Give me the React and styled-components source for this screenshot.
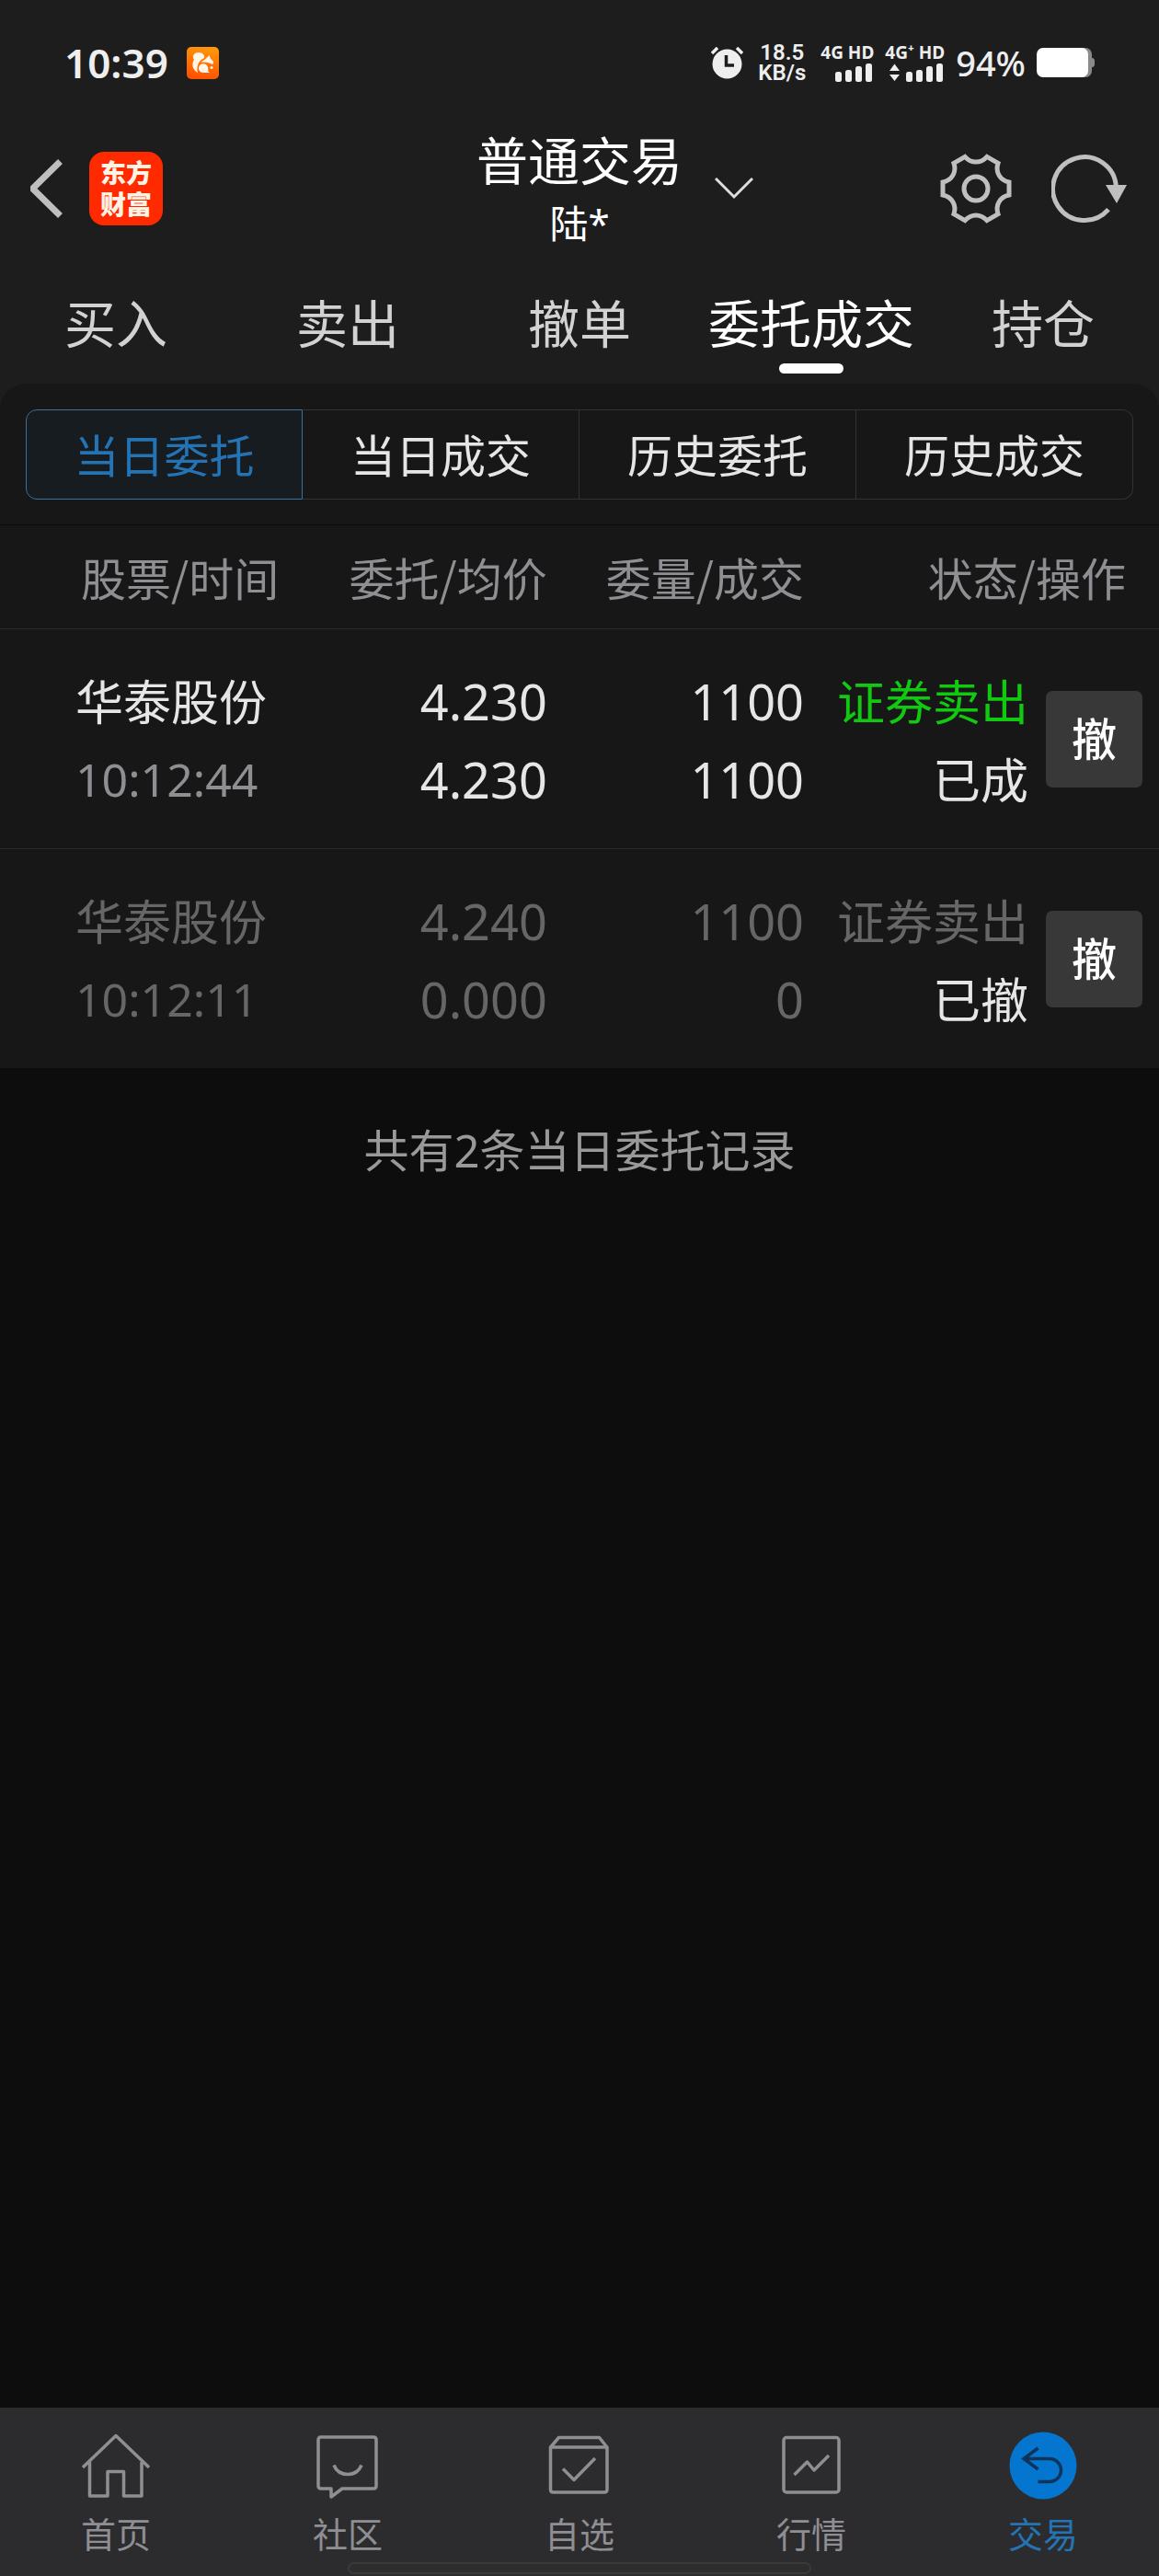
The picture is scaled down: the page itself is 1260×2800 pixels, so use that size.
/**
 * App.jsx
 * ----------------------------------------------------------------------------
 * 委托成交页面
 * - 顶部: 状态栏 + 标题 + 一级标签
 * - 中间: 分段切换 + 委托列表
 * - 底部: 主导航
 * ----------------------------------------------------------------------------
 */

import React, { useState } from "react";
import styled, { createGlobalStyle } from "styled-components";

// 颜色
const HEADER_BG = "#1d1d1e";
const PANEL_BG = "#171717";
const BODY_BG = "#0d0d0d";
const NAV_BG = "#2c2c2e";
const LINE = "#2a2a2a";
const TEXT = "#e6e6e6";
const TEXT_MUTED = "#8e8e93";
const TEXT_DIM = "#666666";
const ICON = "#bfbfbf";
const BLUE = "#2474b5";
const GREEN = "#11c911";

// 字号
const FS_TITLE = 56;
const FS_CELL = 52;
const FS_LABEL = 49;

const GlobalStyle = createGlobalStyle`
  * {
    box-sizing: border-box;
  }

  body {
    margin: 0;
    background: ${BODY_BG};
    color: ${TEXT};
    font-family: "Noto Sans", "Noto Sans CJK SC", sans-serif;
  }

  button {
    margin: 0;
    padding: 0;
    border: none;
    background: none;
    color: inherit;
    font: inherit;
    cursor: pointer;
  }
`;

const Page = styled.div`
  display: flex;
  flex-direction: column;
  min-height: 100vh;
`;

const Top = styled.header`
  background: ${HEADER_BG};
`;

/* ---------- 状态栏 ---------- */
const StatusBar = styled.div`
  display: flex;
  align-items: center;
  justify-content: space-between;
  height: 136px;
  padding: 0 70px;
  color: #eeeeee;
`;

const StatusLeft = styled.div`
  display: flex;
  align-items: center;
  gap: 20px;
`;

const Clock = styled.span`
  font-size: 44px;
  font-weight: 600;
  line-height: 60px;
`;

const StatusRight = styled.div`
  display: flex;
  align-items: center;
  gap: 12px;
`;

const Speed = styled.div`
  margin: 0 4px;
  font-family: Roboto, sans-serif;
  font-size: 24px;
  font-weight: 600;
  line-height: 22px;
  text-align: center;
`;

const Signal = styled.div`
  display: flex;
  flex-direction: column;
  align-items: flex-end;
  gap: 2px;
  font-size: 19px;
  font-weight: 700;
  line-height: 20px;
`;

const Percent = styled.span`
  font-size: 38px;
  font-weight: 500;
  line-height: 60px;
`;

/* ---------- 标题栏 ---------- */
const TitleBar = styled.div`
  display: grid;
  grid-template-columns: 1fr auto 1fr;
  align-items: center;
`;

const TitleLeft = styled.div`
  display: flex;
  align-items: center;
  gap: 28px;
  padding-left: 31px;
`;

const TitleRight = styled.div`
  display: flex;
  align-items: center;
  gap: 43px;
  padding: 0 35px;
`;

const IconButton = styled.button`
  display: flex;
  color: ${ICON};
`;

const AccountButton = styled(IconButton)`
  margin-right: auto;
  color: #dddddd;
`;

const AppLogo = styled.a`
  display: flex;
  flex-direction: column;
  align-items: center;
  justify-content: center;
  width: 80px;
  height: 80px;
  border-radius: 16px;
  background: #ff2a00;
  color: #fff3e6;
  font-size: 28px;
  font-weight: 900;
  line-height: 34px;
  text-decoration: none;
`;

const TitleText = styled.div`
  text-align: center;
  color: #ffffff;
`;

const Title = styled.h1`
  margin: 0;
  font-size: ${FS_TITLE}px;
  font-weight: 400;
  line-height: 76px;
`;

const Account = styled.div`
  font-size: 42px;
  line-height: 62px;
`;

/* ---------- 一级标签 ---------- */
const Tabs = styled.nav`
  display: grid;
  grid-template-columns: repeat(5, 1fr);
  padding: 42px 0 11px;
`;

const Tab = styled.button`
  display: flex;
  flex-direction: column;
  align-items: center;
  gap: 9px;
  font-size: ${FS_TITLE}px;
  line-height: 70px;
  white-space: nowrap;
  color: ${({ $active }) => ($active ? "#ffffff" : "#d2d2d2")};

  &::after {
    content: "";
    width: 70px;
    height: 11px;
    border-radius: 6px;
    background: ${({ $active }) => ($active ? "#ffffff" : "transparent")};
  }
`;

/* ---------- 列表面板 ---------- */
const PanelWrap = styled.div`
  background: ${HEADER_BG};
`;

const Panel = styled.section`
  border-radius: 28px 28px 0 0;
  background: ${PANEL_BG};
`;

const Segments = styled.div`
  display: grid;
  grid-template-columns: repeat(4, 1fr);
  padding: 28px 28px 27px;
  border-bottom: 1px solid #0b0b0b;
`;

const Segment = styled.button`
  height: 98px;
  padding-top: 2px;
  border: 1px solid ${({ $active }) => ($active ? "#3b6f9c" : "#333333")};
  border-left-width: ${({ $active }) => ($active ? 1 : 0)}px;
  background: ${({ $active }) => ($active ? "#171c20" : "transparent")};
  color: ${({ $active }) => ($active ? BLUE : TEXT)};
  font-size: ${FS_LABEL}px;
  line-height: 70px;

  &:first-child {
    border-left-width: 1px;
    border-radius: 12px 0 0 12px;
  }

  &:last-child {
    border-radius: 0 12px 12px 0;
  }
`;

const OrderTable = styled.table`
  width: 100%;
  table-layout: fixed;
  border-collapse: separate;
  border-spacing: 0;
`;

const Col = styled.col`
  width: ${({ $w }) => $w}%;
`;

const HeadCell = styled.th`
  height: 113px;
  padding: 0 ${({ $right }) => $right || 0}px 0 ${({ $left }) => $left || 0}px;
  border-bottom: 1px solid ${LINE};
  color: ${TEXT_MUTED};
  font-family: "Noto Sans CJK SC", sans-serif;
  font-size: ${FS_LABEL}px;
  font-weight: 400;
  line-height: 70px;
  text-align: ${({ $left }) => ($left ? "left" : "right")};
  white-space: nowrap;
`;

const Row = styled.tr`
  color: ${({ $dim }) => ($dim ? TEXT_DIM : TEXT)};

  &:not(:last-child) td {
    border-bottom: 1px solid ${LINE};
  }
`;

const Cell = styled.td`
  padding: 36px ${({ $right }) => $right || 0}px 32px
    ${({ $left }) => $left || 0}px;
  font-size: ${FS_CELL}px;
  line-height: 85px;
  text-align: ${({ $left }) => ($left ? "left" : "right")};
  white-space: nowrap;
`;

const ActionCell = styled(Cell)`
  padding: 0 18px 0 0;
`;

const Figure = styled.div`
  font-size: 54px;
`;

const Time = styled.div`
  color: ${({ $dim }) => ($dim ? TEXT_DIM : TEXT_MUTED)};
  font-size: 50px;
`;

const Side = styled.div`
  color: ${({ $dim }) => ($dim ? TEXT_DIM : GREEN)};
`;

const Status = styled.div`
  color: ${TEXT};
`;

const CancelButton = styled.button`
  width: 105px;
  height: 105px;
  border-radius: 7px;
  background: #383838;
  color: #ffffff;
  font-size: ${FS_LABEL}px;
  font-weight: 500;
  line-height: 70px;
  vertical-align: middle;
`;

const Summary = styled.p`
  flex: 1;
  margin: 0;
  padding-top: 54px;
  color: #999999;
  font-size: ${FS_LABEL}px;
  line-height: 70px;
  text-align: center;
`;

/* ---------- 底部导航 ---------- */
const BottomNav = styled.footer`
  display: flex;
  flex-direction: column;
  align-items: center;
  gap: 6px;
  padding: 26px 0 2px;
  background: ${NAV_BG};
`;

const NavList = styled.nav`
  display: grid;
  grid-template-columns: repeat(5, 1fr);
  width: 100%;
`;

const NavItem = styled.a`
  display: flex;
  flex-direction: column;
  align-items: center;
  gap: 12px;
  color: ${({ $active }) => ($active ? BLUE : TEXT_MUTED)};
  font-size: 38px;
  line-height: 50px;
  text-decoration: none;
`;

const GestureBar = styled.div`
  width: 40%;
  height: 13px;
  border: 2px solid #3a3a3c;
  border-radius: 7px;
  background: #2d2d2d;
`;

/* ---------- 图标 ---------- */
const SquirrelIcon = () => (
  <svg width="35" height="35" viewBox="0 0 35 35" aria-hidden="true">
    <defs>
      <linearGradient id="uc" x1="0.8" y1="0" x2="0.6" y2="1">
        <stop offset="0" stopColor="#ff9a0a" />
        <stop offset="1" stopColor="#ff5200" />
      </linearGradient>
    </defs>
    <rect width="35" height="35" rx="5" fill="url(#uc)" />
    <g fill="#fff6e8">
      <path d="M12 28C6 25 5 18 8 14C5 9 9 6 13 6C17 6 20 9 19 12C14 14 10 20 12 28Z" />
      <path d="M15 17C18 15 22 12 24.500 9L26 13C29 15 30 17 28 19C24 17 20 16 15 17Z" />
      <path d="M14 20C17 17 22 18 23 22C24 25 22 26 25 28H17C13 27 12 23 14 20Z" />
      <circle cx="27" cy="22.500" r="1.500" />
    </g>
  </svg>
);

const AlarmIcon = () => (
  <svg width="35" height="35" viewBox="0 0 35 35" aria-hidden="true">
    <circle cx="17.500" cy="18.500" r="16" fill="#eee" />
    <path d="M1 7L7 1M34 7L28 1" stroke="#eee" strokeWidth="3.500" />
    <path d="M16.500 9V20H25" fill="none" stroke={HEADER_BG} strokeWidth="3.500" />
  </svg>
);

const SignalIcon = ({ traffic }) => (
  <svg
    width={traffic ? 60 : 42}
    height="20"
    viewBox={traffic ? "-18 0 60 20" : "0 0 42 20"}
    fill="#eee"
    aria-hidden="true"
  >
    {traffic && <path d="M-12.500 0.500L-7 8H-18ZM-12.500 19L-7 12H-18Z" />}
    <rect x="0" y="9" width="7" height="11" rx="2.500" />
    <rect x="11" y="7" width="7" height="13" rx="2.500" />
    <rect x="22" y="3" width="7" height="17" rx="2.500" />
    <rect x="33" y="0" width="7" height="20" rx="2.500" />
  </svg>
);

const BatteryIcon = () => (
  <svg width="63" height="32" viewBox="0 0 63 32" aria-hidden="true">
    <rect x="2" y="0" width="58" height="32" rx="7" fill="#8a8a8a" />
    <path d="M58 11H60Q63 11 63 14V18Q63 21 60 21H58Z" fill="#8a8a8a" />
    <rect x="0" y="0" width="56" height="32" rx="7" fill="#fff" />
  </svg>
);

const BackIcon = () => (
  <svg width="38" height="66" viewBox="0 0 38 66" aria-hidden="true">
    <path
      d="M34.500 3.500L4.500 33L34.500 62.500"
      fill="none"
      stroke="currentColor"
      strokeWidth="7"
      strokeLinejoin="bevel"
    />
  </svg>
);

const ChevronIcon = () => (
  <svg width="42" height="24" viewBox="0 0 42 24" aria-hidden="true">
    <path
      d="M1 1L21 21L41 1"
      fill="none"
      stroke="currentColor"
      strokeWidth="3"
    />
  </svg>
);

// 六齿齿轮轮廓: 每 60° 一个齿，齿间为内凹弧线
const gearPath = () => {
  const at = (x, y, deg) => {
    const a = (deg * Math.PI) / 180;
    const px = x * Math.cos(a) - y * Math.sin(a);
    const py = x * Math.sin(a) + y * Math.cos(a);
    return `${px.toFixed(2)} ${py.toFixed(2)}`;
  };
  let d = `M${at(36, -7, 0)}`;
  for (let i = 0; i < 6; i += 1) {
    const deg = i * 60;
    d += `L${at(36, 7, deg)}`;
    d += `C${at(26, 9, deg)} ${at(26, -9, deg + 60)} ${at(36, -7, deg + 60)}`;
  }
  return `${d}Z`;
};

const GearIcon = () => (
  <svg width="78" height="78" viewBox="-39 -39 78 78" aria-hidden="true">
    <g fill="none" stroke="currentColor" strokeWidth="5">
      <path d={gearPath()} />
      <circle r="13" />
    </g>
  </svg>
);

const RefreshIcon = () => (
  <svg width="82" height="76" viewBox="0 0 82 76" aria-hidden="true">
    <path
      d="M62 60.700A34.400 34.400 0 1 1 70.400 37"
      fill="none"
      stroke="currentColor"
      strokeWidth="5"
    />
    <path d="M59 34H82L71 54Z" fill="currentColor" />
  </svg>
);

const NavIcon = ({ children }) => (
  <svg
    width="74"
    height="74"
    viewBox="0 0 74 74"
    fill="none"
    stroke="currentColor"
    strokeWidth="3.500"
    strokeLinejoin="round"
    aria-hidden="true"
  >
    {children}
  </svg>
);

const HomeIcon = () => (
  <NavIcon>
    <path d="M1 39L37 4.500L73 39M8.500 33V70H28V43.500H45.500V70H65V33" />
  </NavIcon>
);

const ChatIcon = () => (
  <NavIcon>
    <path d="M8 6H65Q68 6 68 9V59Q68 62 65 62H31L19 71V62H8Q5 62 5 59V9Q5 6 8 6Z" />
    <path d="M22 36.500Q26 46.500 37 46.500Q48 46.500 52 36.500" />
  </NavIcon>
);

const WatchIcon = () => (
  <NavIcon>
    <path d="M5.500 17L14.500 6.500H58.500L67 17V63Q67 66 64 66H8.500Q5.500 66 5.500 63ZM5.500 17H67" />
    <path d="M19 40.500L31 52.500L54 29" />
  </NavIcon>
);

const QuoteIcon = () => (
  <NavIcon>
    <rect x="7" y="6.500" width="60" height="59.500" rx="3" />
    <path d="M18.500 47L32.500 33L40 42L56 26" />
  </NavIcon>
);

const TradeIcon = () => (
  <NavIcon>
    <circle cx="37" cy="37" r="36.500" fill="#0576d0" stroke="none" />
    <path
      d="M31.500 18L16 29.500L31.500 41M16 29.500H44A12.500 12.500 0 0 1 44 54.500H31.500"
      stroke="#0e3459"
      strokeLinejoin="miter"
    />
  </NavIcon>
);

/* ---------- 数据 ---------- */
const TABS = ["买入", "卖出", "撤单", "委托成交", "持仓"];
const SEGMENTS = ["当日委托", "当日成交", "历史委托", "历史成交"];

const ORDERS = [
  {
    name: "华泰股份",
    time: "10:12:44",
    price: "4.230",
    avg: "4.230",
    amount: "1100",
    filled: "1100",
    side: "证券卖出",
    status: "已成",
    dim: false,
  },
  {
    name: "华泰股份",
    time: "10:12:11",
    price: "4.240",
    avg: "0.000",
    amount: "1100",
    filled: "0",
    side: "证券卖出",
    status: "已撤",
    dim: true,
  },
];

const NAV = [
  { label: "首页", Icon: HomeIcon },
  { label: "社区", Icon: ChatIcon },
  { label: "自选", Icon: WatchIcon },
  { label: "行情", Icon: QuoteIcon },
  { label: "交易", Icon: TradeIcon },
];

/* 主组件 */
const App = () => {
  const [tab, setTab] = useState("委托成交");
  const [segment, setSegment] = useState("当日委托");

  return (
    <Page>
      <GlobalStyle />

      <Top>
        <StatusBar>
          <StatusLeft>
            <Clock>10:39</Clock>
            <SquirrelIcon />
          </StatusLeft>
          <StatusRight>
            <AlarmIcon />
            <Speed>
              18.5
              <br />
              KB/s
            </Speed>
            <Signal>
              <span>4G HD</span>
              <SignalIcon />
            </Signal>
            <Signal>
              <span>4G⁺ HD</span>
              <SignalIcon traffic />
            </Signal>
            <Percent>94%</Percent>
            <BatteryIcon />
          </StatusRight>
        </StatusBar>

        <TitleBar>
          <TitleLeft>
            <IconButton aria-label="返回">
              <BackIcon />
            </IconButton>
            <AppLogo href="#home">
              <span>东方</span>
              <span>财富</span>
            </AppLogo>
          </TitleLeft>
          <TitleText>
            <Title>普通交易</Title>
            <Account>陆*</Account>
          </TitleText>
          <TitleRight>
            <AccountButton aria-label="切换账户">
              <ChevronIcon />
            </AccountButton>
            <IconButton aria-label="设置">
              <GearIcon />
            </IconButton>
            <IconButton aria-label="刷新">
              <RefreshIcon />
            </IconButton>
          </TitleRight>
        </TitleBar>

        <Tabs>
          {TABS.map((t) => (
            <Tab key={t} $active={t === tab} onClick={() => setTab(t)}>
              {t}
            </Tab>
          ))}
        </Tabs>
      </Top>

      <PanelWrap>
        <Panel>
          <Segments>
            {SEGMENTS.map((s) => (
              <Segment
                key={s}
                $active={s === segment}
                onClick={() => setSegment(s)}
              >
                {s}
              </Segment>
            ))}
          </Segments>

          <OrderTable>
            <colgroup>
              <Col $w={26} />
              <Col $w={22} />
              <Col $w={22} />
              <Col $w={20} />
              <Col $w={10} />
            </colgroup>
            <thead>
              <tr>
                <HeadCell $left={88}>股票/时间</HeadCell>
                <HeadCell $right={10}>委托/均价</HeadCell>
                <HeadCell $right={8}>委量/成交</HeadCell>
                <HeadCell $right={36} colSpan={2}>
                  状态/操作
                </HeadCell>
              </tr>
            </thead>
            <tbody>
              {ORDERS.map((o) => (
                <Row key={o.time} $dim={o.dim}>
                  <Cell $left={82}>
                    <div>{o.name}</div>
                    <Time $dim={o.dim}>{o.time}</Time>
                  </Cell>
                  <Cell $right={10}>
                    <Figure>{o.price}</Figure>
                    <Figure>{o.avg}</Figure>
                  </Cell>
                  <Cell $right={8}>
                    <Figure>{o.amount}</Figure>
                    <Figure>{o.filled}</Figure>
                  </Cell>
                  <Cell $right={16}>
                    <Side $dim={o.dim}>{o.side}</Side>
                    <Status>{o.status}</Status>
                  </Cell>
                  <ActionCell>
                    <CancelButton>撤</CancelButton>
                  </ActionCell>
                </Row>
              ))}
            </tbody>
          </OrderTable>
        </Panel>
      </PanelWrap>

      <Summary>共有2条当日委托记录</Summary>

      <BottomNav>
        <NavList>
          {NAV.map(({ label, Icon }) => (
            <NavItem key={label} href="#" $active={label === "交易"}>
              <Icon />
              {label}
            </NavItem>
          ))}
        </NavList>
        <GestureBar />
      </BottomNav>
    </Page>
  );
};

export default App;
